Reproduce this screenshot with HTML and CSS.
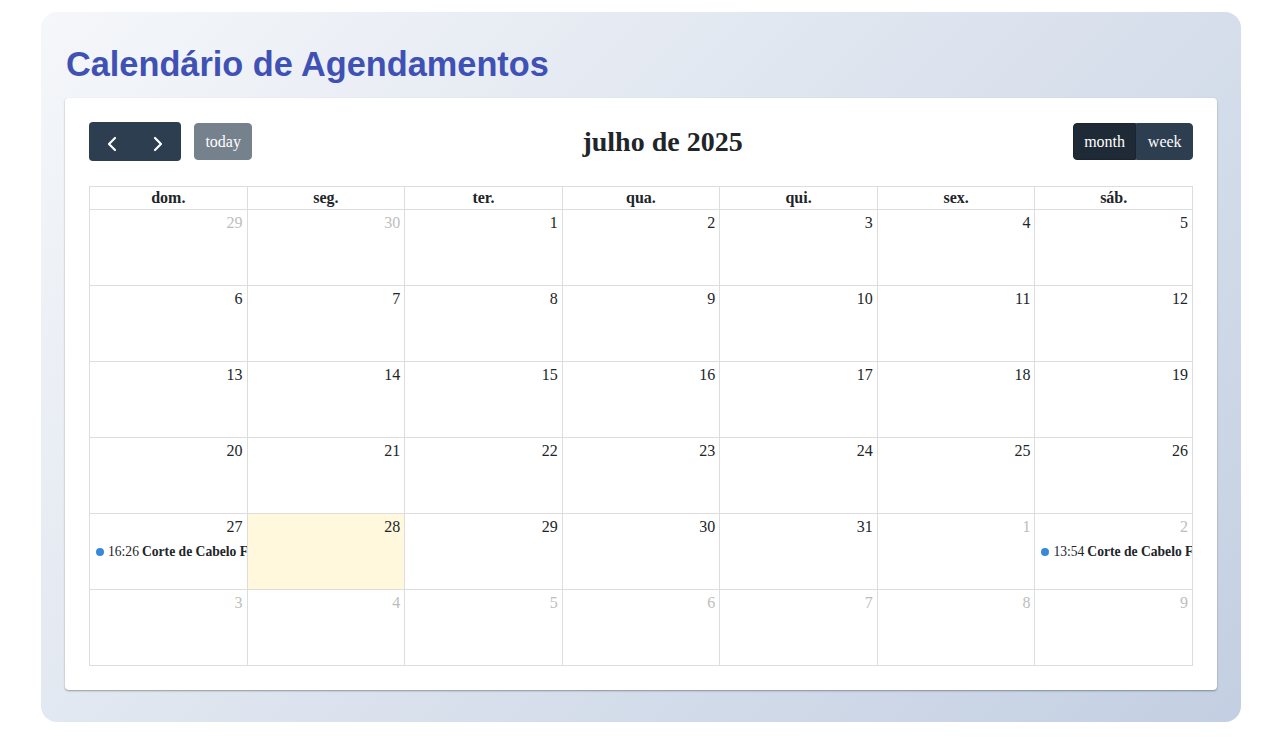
FILE: index.html
```html
<!DOCTYPE html>
<html lang="pt-BR">
<head>
<meta charset="utf-8">
<title>Calendário de Agendamentos</title>
<link rel="stylesheet" href="styles.css">
</head>
<body>
<div class="container">
  <h1 class="page-title">Calendário de Agendamentos</h1>
  <div class="card">
    <div class="toolbar">
      <div class="chunk">
        <div class="btn-group nav-group">
          <button class="btn btn-icon" aria-label="anterior"><svg width="12" height="16" viewBox="0 0 12 16"><path d="M9 2 L3 8 L9 14" fill="none" stroke="#fff" stroke-width="2.2" stroke-linecap="round" stroke-linejoin="round"/></svg></button>
          <button class="btn btn-icon" aria-label="próximo"><svg width="12" height="16" viewBox="0 0 12 16"><path d="M3 2 L9 8 L3 14" fill="none" stroke="#fff" stroke-width="2.2" stroke-linecap="round" stroke-linejoin="round"/></svg></button>
        </div>
        <button class="btn btn-today" disabled>today</button>
      </div>
      <h2 class="cal-title">julho de 2025</h2>
      <div class="chunk">
        <div class="btn-group">
          <button class="btn btn-small active">month</button>
          <button class="btn btn-small">week</button>
        </div>
      </div>
    </div>
    <table class="cal">
      <thead>
        <tr><th>dom.</th><th>seg.</th><th>ter.</th><th>qua.</th><th>qui.</th><th>sex.</th><th>sáb.</th></tr>
      </thead>
      <tbody>
        <tr>
          <td class="other"><div class="num">29</div></td>
          <td class="other"><div class="num">30</div></td>
          <td><div class="num">1</div></td>
          <td><div class="num">2</div></td>
          <td><div class="num">3</div></td>
          <td><div class="num">4</div></td>
          <td><div class="num">5</div></td>
        </tr>
        <tr>
          <td><div class="num">6</div></td>
          <td><div class="num">7</div></td>
          <td><div class="num">8</div></td>
          <td><div class="num">9</div></td>
          <td><div class="num">10</div></td>
          <td><div class="num">11</div></td>
          <td><div class="num">12</div></td>
        </tr>
        <tr>
          <td><div class="num">13</div></td>
          <td><div class="num">14</div></td>
          <td><div class="num">15</div></td>
          <td><div class="num">16</div></td>
          <td><div class="num">17</div></td>
          <td><div class="num">18</div></td>
          <td><div class="num">19</div></td>
        </tr>
        <tr>
          <td><div class="num">20</div></td>
          <td><div class="num">21</div></td>
          <td><div class="num">22</div></td>
          <td><div class="num">23</div></td>
          <td><div class="num">24</div></td>
          <td><div class="num">25</div></td>
          <td><div class="num">26</div></td>
        </tr>
        <tr>
          <td><div class="num">27</div><div class="event"><span class="dot"></span><span class="time">16:26</span><b class="ev-title">Corte de Cabelo Feminino</b></div></td>
          <td class="today"><div class="num">28</div></td>
          <td><div class="num">29</div></td>
          <td><div class="num">30</div></td>
          <td><div class="num">31</div></td>
          <td class="other"><div class="num">1</div></td>
          <td class="other"><div class="num">2</div><div class="event"><span class="dot"></span><span class="time">13:54</span><b class="ev-title">Corte de Cabelo Feminino</b></div></td>
        </tr>
        <tr>
          <td class="other"><div class="num">3</div></td>
          <td class="other"><div class="num">4</div></td>
          <td class="other"><div class="num">5</div></td>
          <td class="other"><div class="num">6</div></td>
          <td class="other"><div class="num">7</div></td>
          <td class="other"><div class="num">8</div></td>
          <td class="other"><div class="num">9</div></td>
        </tr>
      </tbody>
    </table>
  </div>
</div>
</body>
</html>
```
FILE: styles.css
```css
html, body {
  margin: 0;
  padding: 0;
  background: #fff;
}
body {
  padding-left: 2px;
  font-family: "Liberation Serif", "Times New Roman", serif;
  color: #212529;
}
.container {
  width: 1200px;
  height: 710px;
  box-sizing: border-box;
  margin: 12px auto 0;
  padding: 32px 24px;
  border-radius: 16px;
  background: linear-gradient(135deg, #f5f7fa 0%, #c3cfe2 100%);
}
.page-title {
  margin: 2px 0 15px 1px;
  font-family: "Liberation Sans", Arial, sans-serif;
  font-size: 34.3px;
  font-weight: bold;
  line-height: 37px;
  color: #3f51b5;
}
.card {
  background: #fff;
  border-radius: 4px;
  padding: 24px;
  box-shadow: 0 1px 2px rgba(0, 0, 0, 0.35);
}
.toolbar {
  display: flex;
  align-items: center;
  justify-content: space-between;
  height: 39px;
  margin-bottom: 25px;
}
.chunk {
  display: flex;
  align-items: center;
}
.btn-group {
  display: flex;
}
.btn {
  font-family: "Liberation Serif", "Times New Roman", serif;
  font-size: 16px;
  color: #fff;
  background: #2c3e50;
  border: 1px solid #2c3e50;
  border-radius: 4px;
  padding: 0 10.4px;
  height: 37px;
  line-height: 35px;
  cursor: pointer;
}
.btn-group .btn {
  border-radius: 0;
}
.btn-group .btn:first-child {
  border-top-left-radius: 4px;
  border-bottom-left-radius: 4px;
}
.btn-group .btn:last-child {
  border-top-right-radius: 4px;
  border-bottom-right-radius: 4px;
}
.nav-group {
  background: #2c3e50;
  border-radius: 4px;
}
.btn-icon {
  height: 39px;
  width: 46px;
  display: flex;
  align-items: center;
  justify-content: center;
  padding: 4px 0 0;
  border: none;
  background: transparent;
}
.btn-icon svg {
  display: block;
}
.btn-today {
  margin-left: 13px;
  opacity: 0.65;
  cursor: default;
}
.btn-small.active {
  background: #1e2b37;
  border-color: #1a252f;
}
.cal-title {
  margin: 0;
  font-size: 28px;
  font-weight: bold;
  color: #212529;
}
.cal {
  width: 100%;
  border-collapse: collapse;
  table-layout: fixed;
  border: 1px solid #ddd;
}
.cal th {
  border: 1px solid #ddd;
  padding: 2px 4px;
  height: 18px;
  font-size: 16px;
  font-weight: bold;
  line-height: 18px;
  color: #212529;
}
.cal td {
  border: 1px solid #ddd;
  height: 75px;
  padding: 0;
  vertical-align: top;
  overflow: hidden;
}
.cal td.today {
  background: #fff8dd;
}
.num {
  padding: 4px 4px 4px;
  text-align: right;
  font-size: 16px;
  line-height: 18px;
  color: #212529;
}
.other .num {
  color: #bdbdbd;
}
.event {
  margin: 2px 0 0 2px;
  padding: 2px 0;
  display: flex;
  align-items: center;
  white-space: nowrap;
  overflow: hidden;
  font-size: 13.6px;
  line-height: 16px;
  color: #212529;
}
.dot {
  flex: none;
  width: 0;
  height: 0;
  border: 4px solid #3788d8;
  border-radius: 4px;
  margin: 0 4px;
}
.time {
  margin-right: 3px;
}
.ev-title {
  font-weight: bold;
}
```
